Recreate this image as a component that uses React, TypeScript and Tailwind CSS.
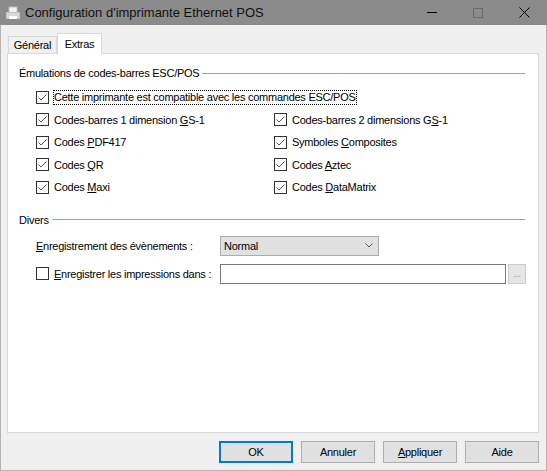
import type { ReactNode } from "react";

const font = { fontFamily: '"Liberation Sans", Arial, sans-serif' };

function Check({ checked }: { checked: boolean }) {
  return (
    <span className="flex h-[13px] w-[13px] shrink-0 items-center justify-center border border-[#333] bg-white">
      {checked && (
        <svg width="11" height="11" viewBox="0 0 11 11">
          <path d="M1.5 5.5 L4 8 L9.5 2.5" fill="none" stroke="#555" strokeWidth="1" />
        </svg>
      )}
    </span>
  );
}

function Row({ children, checked = true }: { children: ReactNode; checked?: boolean }) {
  return (
    <div className="flex h-[22.5px] items-center gap-[5px]">
      <Check checked={checked} />
      <span>{children}</span>
    </div>
  );
}

function Group({ title }: { title: string }) {
  return (
    <div className="flex h-[16px] items-center pr-[13px]">
      <span>{title}</span>
      <span className="ml-[3px] h-px flex-1 bg-[#a0a0a0]" />
    </div>
  );
}

function Button({ children, focused = false }: { children: ReactNode; focused?: boolean }) {
  return (
    <div
      className={
        focused
          ? "flex h-[22px] w-[74px] items-center justify-center border-2 border-[#0078d7] bg-[#e1e1e1]"
          : "flex h-[22px] w-[74px] items-center justify-center border border-[#adadad] bg-[#e1e1e1]"
      }
    >
      {children}
    </div>
  );
}

export default function App() {
  return (
    <div
      className="h-[471px] w-[547px] bg-[#f0f0f0] text-[11px] leading-[16px] tracking-[-0.25px] text-black"
      style={font}
    >
      <div className="flex h-[25px] items-center bg-[#8b8b8b]">
        <svg className="ml-[5px]" width="16" height="16" viewBox="0 0 16 16">
          <rect x="4" y="2" width="8" height="6" fill="#f4f4f4" stroke="#bdbdbd" />
          <rect x="1.5" y="7.5" width="13" height="6" fill="#d8d8d8" stroke="#c4c4c4" />
          <rect x="4" y="11" width="8" height="3" fill="#ffffff" />
        </svg>
        <span className="ml-[4px] text-[13px] tracking-normal text-[#111]">
          Configuration d'imprimante Ethernet POS
        </span>
        <div className="ml-auto flex h-full">
          <div className="flex w-[46px] items-center justify-center">
            <span className="h-px w-[10px] bg-black" />
          </div>
          <div className="flex w-[46px] items-center justify-center">
            <span className="h-[10px] w-[10px] border border-[#6a6a6a]" />
          </div>
          <div className="flex w-[46px] items-center justify-center">
            <svg width="11" height="11" viewBox="0 0 11 11">
              <path d="M0.5 0.5 L10.5 10.5 M10.5 0.5 L0.5 10.5" stroke="#000" strokeWidth="1" />
            </svg>
          </div>
        </div>
      </div>

      <div className="flex h-[446px] flex-col border-x border-b border-[#b4b4b4] pl-[6px] pr-[7px] pt-[8px]">
        <div className="flex items-end">
          <div className="ml-px flex h-[17px] w-[49px] items-center justify-center border border-b-0 border-[#d9d9d9] bg-[#f0f0f0]">
            Général
          </div>
          <div className="relative z-10 -mb-px flex h-[21px] w-[45px] items-start justify-center border border-b-0 border-[#d9d9d9] bg-white pt-[2px]">
            Extras
          </div>
        </div>

        <div className="flex h-[380px] flex-col border border-[#d9d9d9] bg-white pl-[11px] pt-[11px]">
          <Group title="Émulations de codes-barres ESC/POS" />
          <div className="ml-[17px] mt-[5px]">
            <div className="flex h-[22.5px] items-center gap-[4px]">
              <Check checked />
              <span className="border border-dotted border-black leading-[13px]">
                Cette imprimante est compatible avec les commandes ESC/POS
              </span>
            </div>
            <div className="grid grid-cols-[238px_1fr]">
              <Row>
                Codes-barres 1 dimension <u>G</u>S-1
              </Row>
              <Row>
                Codes-barres 2 dimensions G<u>S</u>-1
              </Row>
              <Row>
                Codes <u>P</u>DF417
              </Row>
              <Row>
                Symboles <u>C</u>omposites
              </Row>
              <Row>
                Codes <u>Q</u>R
              </Row>
              <Row>
                Codes <u>A</u>ztec
              </Row>
              <Row>
                Codes <u>M</u>axi
              </Row>
              <Row>
                Codes <u>D</u>ataMatrix
              </Row>
            </div>
          </div>

          <div className="mt-[13px]">
            <Group title="Divers" />
          </div>
          <div className="ml-[17px] mt-[8px] flex flex-col gap-[8px]">
            <div className="flex h-[20px] items-center">
              <span className="w-[184px]">
                <u>E</u>nregistrement des évènements :
              </span>
              <div className="flex h-[20px] w-[159px] items-center justify-between border border-[#adadad] bg-[#e1e1e1] pl-[3px] pr-[5px]">
                <span>Normal</span>
                <svg width="8" height="5" viewBox="0 0 8 5">
                  <path d="M0.5 0.5 L4 4 L7.5 0.5" fill="none" stroke="#555" strokeWidth="1" />
                </svg>
              </div>
            </div>
            <div className="flex h-[20px] items-center">
              <div className="flex w-[184px] items-center gap-[5px]">
                <Check checked={false} />
                <span>
                  <u>E</u>nregistrer les impressions dans :
                </span>
              </div>
              <div className="h-[20px] w-[286px] border border-[#7a7a7a] bg-white" />
              <div className="ml-[2px] flex h-[20px] w-[18px] items-center justify-center border border-[#cccccc] bg-[#e6e6e6] text-[10px] text-[#a0a0a0]">
                ...
              </div>
            </div>
          </div>
        </div>

        <div className="mt-[8px] flex justify-end gap-[8px]">
          <Button focused>OK</Button>
          <Button>Annuler</Button>
          <Button>
            <span>
              <u>A</u>ppliquer
            </span>
          </Button>
          <Button>Aide</Button>
        </div>
      </div>
    </div>
  );
}
